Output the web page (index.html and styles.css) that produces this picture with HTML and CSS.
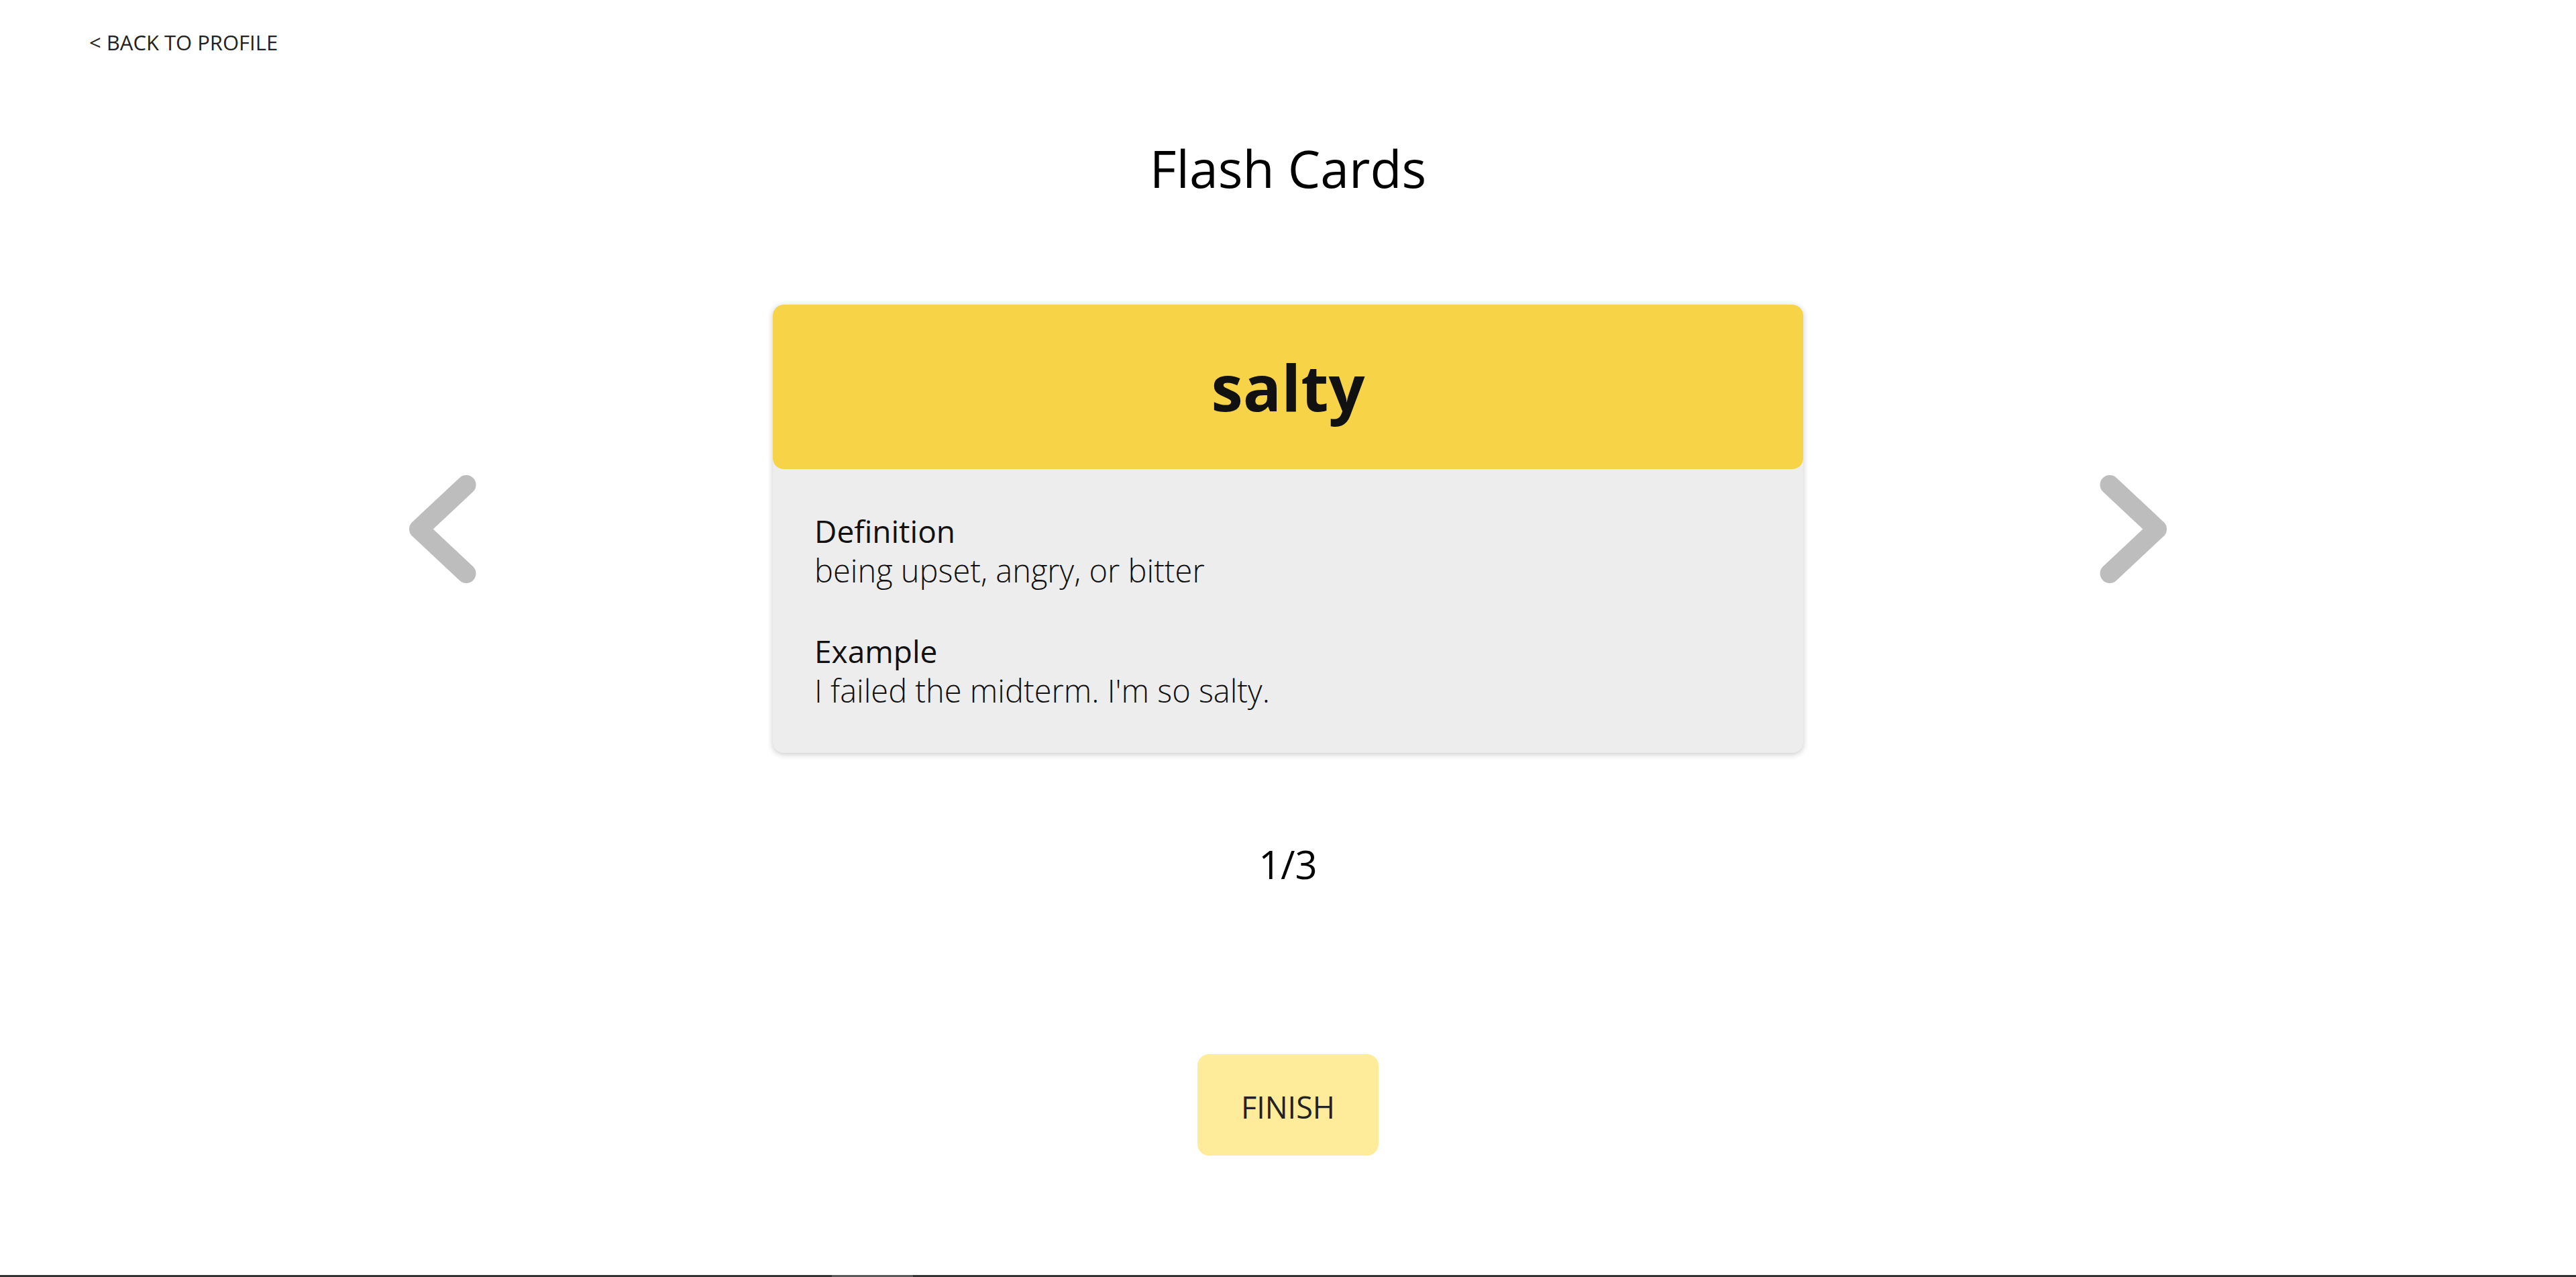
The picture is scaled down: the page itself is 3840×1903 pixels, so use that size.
FILE: index.html
```html
<!DOCTYPE html>
<html lang="en">
<head>
<meta charset="utf-8">
<title>Flash Cards</title>
<link rel="stylesheet" href="styles.css">
</head>
<body>
<div class="page">
  <header class="topbar">
    <a class="back-link" href="#">&lt; BACK TO PROFILE</a>
  </header>
  <main class="content">
    <h1 class="title">Flash Cards</h1>
    <section class="deck">
      <button class="nav-arrow" aria-label="Previous card">
        <svg width="100" height="161" viewBox="0 0 100 161"><path d="M85 14.5 L14.5 80.5 L85 146.5" fill="none" stroke="#bdbdbd" stroke-width="29" stroke-linecap="round" stroke-linejoin="round"/></svg>
      </button>
      <article class="card">
        <div class="card-head">salty</div>
        <div class="card-body">
          <div class="field">
            <div class="field-label">Definition</div>
            <div class="field-text">being upset, angry, or bitter</div>
          </div>
          <div class="field">
            <div class="field-label">Example</div>
            <div class="field-text">I failed the midterm. I'm so salty.</div>
          </div>
        </div>
      </article>
      <button class="nav-arrow" aria-label="Next card">
        <svg width="100" height="161" viewBox="0 0 100 161"><path d="M15 14.5 L85.5 80.5 L15 146.5" fill="none" stroke="#bdbdbd" stroke-width="29" stroke-linecap="round" stroke-linejoin="round"/></svg>
      </button>
    </section>
    <div class="counter">1/3</div>
    <button class="finish-btn">FINISH</button>
  </main>
  <footer class="bottom-bar"><div class="bottom-thumb"></div></footer>
</div>
</body>
</html>
```
FILE: styles.css
```css
html, body {
  margin: 0;
  padding: 0;
  background: #ffffff;
}

body {
  font-family: "Open Sans", "Noto Sans", sans-serif;
  color: #111111;
}

.page {
  min-height: 100vh;
  display: flex;
  flex-direction: column;
}

.topbar {
  padding: 42px 0 0 133px;
}

.back-link {
  display: inline-block;
  font-size: 31px;
  line-height: 42px;
  color: #222222;
  text-decoration: none;
  font-weight: 400;
}

.content {
  display: flex;
  flex-direction: column;
  align-items: center;
}

.title {
  margin: 121px 0 0;
  font-size: 77px;
  line-height: 92px;
  font-weight: 400;
  color: #000000;
}

.deck {
  margin-top: 157px;
  display: flex;
  align-items: center;
  gap: 442px;
}

.nav-arrow {
  display: flex;
  padding: 0;
  border: 0;
  background: none;
  cursor: pointer;
}

.card {
  width: 1536px;
  border-radius: 16px;
  background: #ededed;
  box-shadow: 0 2px 10px rgba(0, 0, 0, 0.22);
  overflow: hidden;
}

.card-head {
  height: 245px;
  line-height: 245px;
  text-align: center;
  background: #f7d348;
  border-radius: 16px;
  font-size: 95px;
  font-weight: 700;
  color: #111111;
}

.card-body {
  padding: 63px 63px 63px 62px;
  display: flex;
  flex-direction: column;
  gap: 61px;
}

.field-label {
  font-size: 46px;
  line-height: 59px;
  font-weight: 400;
  color: #111111;
}

.field-text {
  font-size: 47px;
  line-height: 59px;
  font-weight: 300;
  color: #111111;
}

.counter {
  margin-top: 131px;
  font-size: 58px;
  line-height: 70px;
  color: #000000;
}

.finish-btn {
  margin-top: 248px;
  width: 270px;
  height: 151px;
  padding: 6px 0 0;
  border: 0;
  border-radius: 17px;
  background: #feec9a;
  font-family: "Open Sans", "Noto Sans", sans-serif;
  font-size: 45px;
  font-weight: 400;
  color: #222222;
  cursor: pointer;
}

.bottom-bar {
  margin-top: auto;
  height: 3px;
  background: #333333;
  display: flex;
}

.bottom-thumb {
  margin-left: 1240px;
  width: 121px;
  background: #5a5a5a;
}
```
